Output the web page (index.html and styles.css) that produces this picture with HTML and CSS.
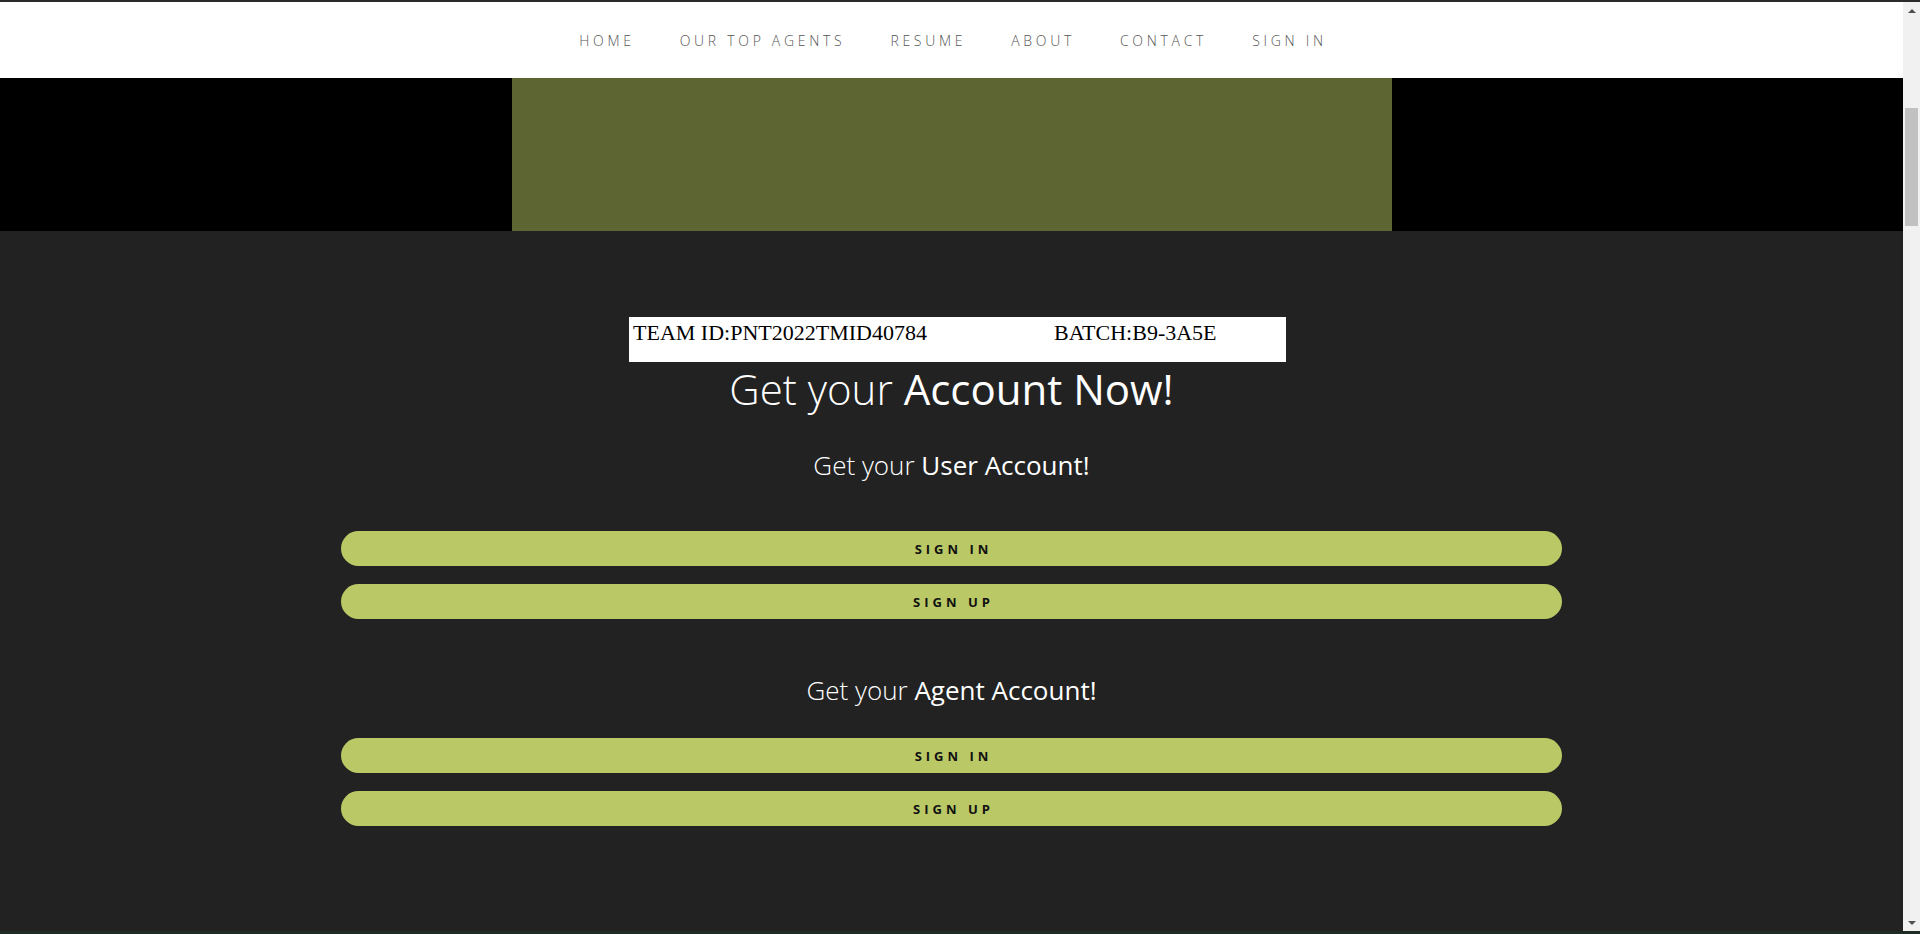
FILE: index.html
```html
<!DOCTYPE html>
<html lang="en">
<head>
<meta charset="utf-8">
<title>Get your Account Now!</title>
<link rel="stylesheet" href="styles.css">
</head>
<body>
<div class="frame">
  <div class="viewport">
    <div class="page">
      <nav class="nav">
        <a class="nav-link" href="#">Home</a>
        <a class="nav-link" href="#">Our Top Agents</a>
        <a class="nav-link" href="#">Resume</a>
        <a class="nav-link" href="#">About</a>
        <a class="nav-link" href="#">Contact</a>
        <a class="nav-link" href="#">Sign In</a>
      </nav>
      <div class="hero">
        <div class="hero-block"></div>
      </div>
      <section class="account">
        <div class="team-box">
          <span class="team-cell team-id">TEAM ID:PNT2022TMID40784</span>
          <span class="team-cell">BATCH:B9-3A5E</span>
        </div>
        <h1 class="title"><span class="light">Get your</span> Account Now!</h1>
        <h2 class="subtitle user-title"><span class="light">Get your</span> User Account!</h2>
        <div class="buttons user-buttons">
          <a class="btn" href="#">Sign In</a>
          <a class="btn" href="#">Sign Up</a>
        </div>
        <h2 class="subtitle agent-title"><span class="light">Get your</span> Agent Account!</h2>
        <div class="buttons agent-buttons">
          <a class="btn" href="#">Sign In</a>
          <a class="btn" href="#">Sign Up</a>
        </div>
      </section>
    </div>
    <div class="scrollbar">
      <div class="sb-arrow"><span class="tri-up"></span></div>
      <div class="sb-track"><div class="sb-thumb"></div></div>
      <div class="sb-arrow"><span class="tri-down"></span></div>
    </div>
  </div>
  <div class="taskbar"></div>
</div>
</body>
</html>
```
FILE: styles.css
```css
html, body {
  margin: 0;
  padding: 0;
  height: 100%;
  overflow: hidden;
  background: #222222;
}

.frame {
  display: flex;
  flex-direction: column;
  height: 934px;
  border-top: 2px solid #2a2a2a;
  box-sizing: border-box;
}

.viewport {
  display: flex;
  flex: 1;
  min-height: 0;
}

.page {
  flex: 1;
  min-width: 0;
  background: #222222;
  overflow: hidden;
}

.nav {
  height: 76px;
  background: #ffffff;
  display: flex;
  justify-content: center;
  align-items: center;
  gap: 45px;
  padding-left: 3px;
}

.nav-link {
  font-family: "Open Sans", "Liberation Sans", sans-serif;
  font-weight: 300;
  font-size: 14px;
  letter-spacing: 3.7px;
  text-transform: uppercase;
  color: #555555;
  text-decoration: none;
}

.hero {
  height: 153px;
  background: #000000;
  display: flex;
  justify-content: center;
}

.hero-block {
  width: 880px;
  background: #5d6532;
}

.account {
  padding-top: 86px;
  display: flex;
  flex-direction: column;
  align-items: center;
  font-family: "Open Sans", "Liberation Sans", sans-serif;
  color: #ffffff;
}

.team-box {
  width: 657px;
  height: 45px;
  box-sizing: border-box;
  background: #ffffff;
  padding: 3px 4px 0;
  margin-left: 12px;
  display: flex;
  align-items: flex-start;
}

.team-cell {
  font-family: "Liberation Serif", "Times New Roman", serif;
  font-size: 22px;
  line-height: 25px;
  color: #000000;
}

.team-id {
  width: 421px;
}

.title {
  margin: 0;
  font-size: 42px;
  line-height: 54px;
  font-weight: 400;
  text-align: center;
}

.light {
  font-weight: 300;
}

.subtitle {
  margin: 0;
  font-size: 26px;
  line-height: 34px;
  font-weight: 400;
  text-align: center;
}

.user-title {
  margin-top: 32px;
}

.agent-title {
  margin-top: 54px;
}

.buttons {
  width: 1221px;
  display: flex;
  flex-direction: column;
  gap: 18px;
}

.user-buttons {
  margin-top: 49px;
}

.agent-buttons {
  margin-top: 31px;
}

.btn {
  display: flex;
  justify-content: center;
  align-items: center;
  height: 35px;
  border-radius: 18px;
  background: #bac866;
  color: #111111;
  font-family: "Open Sans", "Liberation Sans", sans-serif;
  font-weight: 700;
  font-size: 13px;
  letter-spacing: 4px;
  text-transform: uppercase;
  text-decoration: none;
  padding-left: 4px;
}

.scrollbar {
  width: 17px;
  background: #f1f1f1;
  display: flex;
  flex-direction: column;
}

.sb-arrow {
  height: 17px;
  display: flex;
  justify-content: center;
  align-items: center;
}

.tri-up {
  width: 0;
  height: 0;
  border-left: 4px solid transparent;
  border-right: 4px solid transparent;
  border-bottom: 4px solid #505050;
}

.tri-down {
  width: 0;
  height: 0;
  border-left: 4px solid transparent;
  border-right: 4px solid transparent;
  border-top: 4px solid #505050;
}

.sb-track {
  flex: 1;
  padding: 0 2px;
}

.sb-thumb {
  margin-top: 89px;
  height: 118px;
  background: #c1c1c1;
}

.taskbar {
  height: 3px;
  background: #1f2b25;
}
```
